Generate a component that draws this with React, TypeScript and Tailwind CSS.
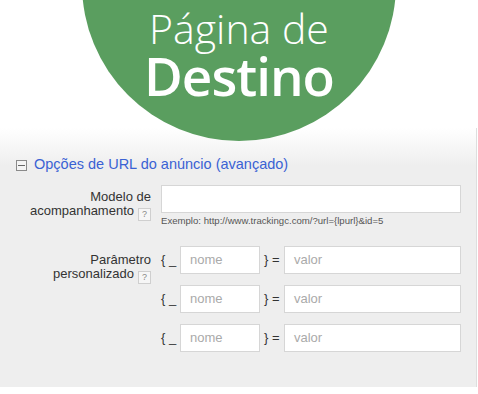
import React from "react";

const HelpIcon = () => (
  <span className="ml-[4px] inline-flex h-[13px] w-[13px] items-center justify-center border border-[#cfcfcf] bg-[#f6f6f6] align-[-2px] text-[9px] leading-none text-[#888]">
    ?
  </span>
);

const ParamRow = () => (
  <div className="flex h-[28px] items-center">
    <span className="w-[19px] text-[13px] text-[#333]">{"{ _"}</span>
    <div className="flex h-[28px] w-[80px] items-center border border-[#d6d6d6] bg-white pl-[9px] text-[13px] text-[#aaa]">
      nome
    </div>
    <span className="w-[24px] pl-[4px] text-[13px] text-[#333]">{"} ="}</span>
    <div className="flex h-[28px] w-[177px] items-center border border-[#d6d6d6] bg-white pl-[9px] text-[13px] text-[#aaa]">
      valor
    </div>
  </div>
);

export default function App() {
  return (
    <div className="relative h-[394px] w-[478px] overflow-hidden bg-white font-['Liberation_Sans',Arial,sans-serif]">
      {/* green badge */}
      <div className="absolute left-[82px] top-[-173px] z-10 h-[314px] w-[314px] rounded-full bg-[#5a9e5f]" />

      <div className="relative z-20 flex h-[128px] flex-col items-center pt-[5px] font-['Open_Sans',sans-serif] text-white">
        <div className="text-[41px] font-light leading-[46px]">Página de</div>
        <div className="text-[53px] font-semibold leading-[50px] tracking-[-1px]">Destino</div>
      </div>

      <div className="h-[259px] w-[477px] border-r border-[#dedede] bg-[linear-gradient(to_bottom,#ffffff_0px,#eeeeee_38px)] pt-[28px]">
        <div className="flex h-[18px] items-center pl-[16px]">
          <span className="flex h-[11px] w-[11px] items-center justify-center border border-[#8a8a8a] bg-[#f4f4f4]">
            <span className="h-px w-[7px] bg-[#666]" />
          </span>
          <span className="ml-[7px] text-[14.5px] text-[#3a62d4]">
            Opções de URL do anúncio (avançado)
          </span>
        </div>

        <div className="mt-[11px] grid grid-cols-[151px_300px] gap-x-[10px]">
          <div className="pt-[5px] text-right text-[13px] leading-[14px] text-[#333]">
            Modelo de
            <br />
            acompanhamento
            <HelpIcon />
          </div>
          <div>
            <div className="h-[28px] w-[300px] border border-[#d6d6d6] bg-white" />
            <div className="mt-[2px] text-[9.6px] leading-[12px] text-[#555]">
              Exemplo: http://www.trackingc.com/?url={"{lpurl}"}&amp;id=5
            </div>
          </div>

          <div className="mt-[19px] pt-[7px] text-right text-[13px] leading-[14px] text-[#333]">
            Parâmetro
            <br />
            personalizado
            <HelpIcon />
          </div>
          <div className="mt-[19px] flex flex-col gap-[11px]">
            <ParamRow />
            <ParamRow />
            <ParamRow />
          </div>
        </div>
      </div>
    </div>
  );
}
